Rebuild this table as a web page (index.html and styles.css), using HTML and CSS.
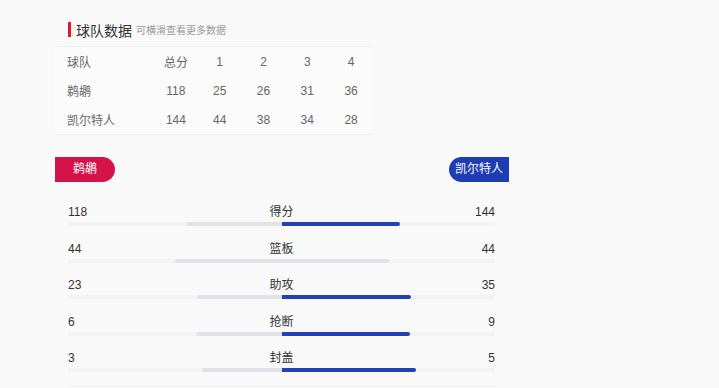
FILE: index.html
```html
<!DOCTYPE html>
<html lang="zh">
<head>
<meta charset="utf-8">
<link rel="stylesheet" href="styles.css">
</head>
<body>
<div class="page">
  <div class="head">
    <span class="mark"></span>
    <span class="title">球队数据</span>
    <span class="sub">可横滑查看更多数据</span>
  </div>
  <div class="table">
    <div class="tr"><span class="name">球队</span><span>总分</span><span>1</span><span>2</span><span>3</span><span>4</span></div>
    <div class="tr"><span class="name">鹈鹕</span><span>118</span><span>25</span><span>26</span><span>31</span><span>36</span></div>
    <div class="tr"><span class="name">凯尔特人</span><span>144</span><span>44</span><span>38</span><span>34</span><span>28</span></div>
  </div>

  <div class="compare">
    <div class="pills">
      <span class="pill home">鹈鹕</span>
      <span class="pill away">凯尔特人</span>
    </div>
    <div class="stats">
      <div class="stat">
        <div class="line"><span>118</span><span class="label">得分</span><span class="r">144</span></div>
        <div class="track"><div class="half left"><i class="bar gray" style="width:96px"></i></div><div class="half right"><i class="bar blue" style="width:118px"></i></div></div>
      </div>
      <div class="stat">
        <div class="line"><span>44</span><span class="label">篮板</span><span class="r">44</span></div>
        <div class="track"><div class="half left"><i class="bar gray" style="width:107px"></i></div><div class="half right"><i class="bar gray" style="width:107px"></i></div></div>
      </div>
      <div class="stat">
        <div class="line"><span>23</span><span class="label">助攻</span><span class="r">35</span></div>
        <div class="track"><div class="half left"><i class="bar gray" style="width:85px"></i></div><div class="half right"><i class="bar blue" style="width:129px"></i></div></div>
      </div>
      <div class="stat">
        <div class="line"><span>6</span><span class="label">抢断</span><span class="r">9</span></div>
        <div class="track"><div class="half left"><i class="bar gray" style="width:86px"></i></div><div class="half right"><i class="bar blue" style="width:128px"></i></div></div>
      </div>
      <div class="stat">
        <div class="line"><span>3</span><span class="label">封盖</span><span class="r">5</span></div>
        <div class="track"><div class="half left"><i class="bar gray" style="width:80px"></i></div><div class="half right"><i class="bar blue" style="width:134px"></i></div></div>
      </div>
    </div>
  </div>
</div>
</body>
</html>
```
FILE: styles.css
```css
html, body {
  margin: 0;
  padding: 0;
  background: #f9f9f9;
  font-family: "Liberation Sans", "Noto Sans CJK SC", sans-serif;
  color: #333;
}
.page {
  padding-left: 55px;
  width: 454px;
}
.head {
  display: flex;
  align-items: center;
  height: 19px;
  padding: 20px 0 0 13px;
  margin-bottom: 7px;
}
.mark {
  width: 3px;
  height: 15px;
  background: #e0182a;
  margin-right: 5px;
}
.title {
  font-size: 14px;
  color: #333;
  margin-right: 4px;
}
.sub {
  font-size: 10px;
  color: #999;
}
.table {
  width: 318px;
  border-top: 1px solid #efefef;
  border-bottom: 1px solid #efefef;
  background: #fbfbfb;
}
.tr {
  display: grid;
  grid-template-columns: 99px repeat(5, 43.8px);
  height: 29px;
  align-items: center;
  font-size: 12px;
  color: #666;
}
.tr span {
  text-align: center;
}
.tr .name {
  text-align: left;
  padding-left: 12px;
}
.compare {
  margin-top: 22px;
}
.pills {
  display: flex;
  justify-content: space-between;
}
.pill {
  height: 25px;
  line-height: 25px;
  font-size: 12px;
  color: #fff;
  text-align: center;
}
.home {
  width: 60px;
  background: #d3134a;
  border-radius: 0 13px 13px 0;
}
.away {
  width: 60px;
  background: #1e3cb4;
  border-radius: 13px 0 0 13px;
}
.stats {
  margin: 0 14px 0 13px;
  padding-top: 22px;
  border-bottom: 1px solid #f1f1f3;
}
.stat {
  padding-bottom: 14px;
}
.stat + .stat {
  margin-top: 0.5px;
}
.line {
  display: grid;
  grid-template-columns: 1fr auto 1fr;
  font-size: 12px;
  line-height: 16px;
  color: #333;
}
.line .r {
  text-align: right;
}
.label {
  text-align: center;
}
.track {
  display: grid;
  grid-template-columns: 1fr 1fr;
  margin-top: 2px;
  height: 4px;
  background: #f3f3f6;
}
.half {
  display: flex;
}
.left {
  justify-content: flex-end;
}
.bar {
  display: block;
  height: 4px;
}
.gray {
  background: #e1e1e8;
}
.left .bar {
  border-radius: 2px 0 0 2px;
}
.right .bar {
  border-radius: 0 2px 2px 0;
}
.blue {
  background: #2241b3;
}
```
